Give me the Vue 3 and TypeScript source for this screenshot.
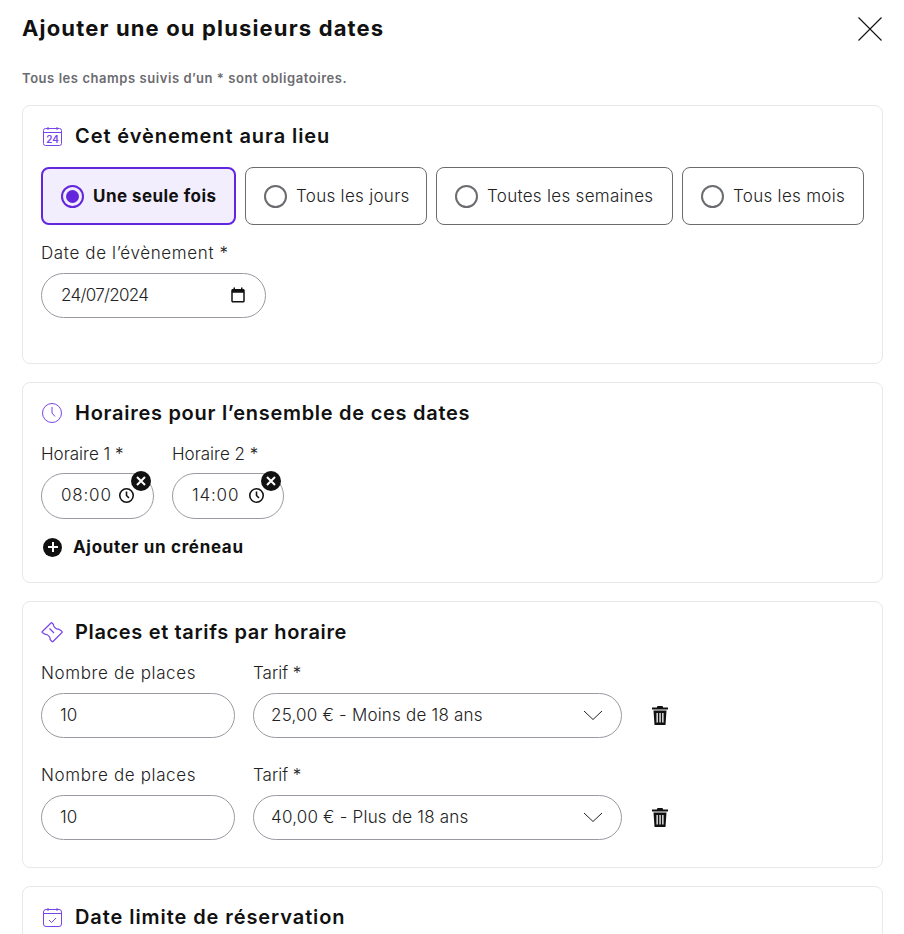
<script setup lang="ts">
interface Option { label: string; width: number; active?: boolean }
interface Price { places: string; tarif: string }
const options: Option[] = [
  { label: 'Une seule fois', width: 195, active: true },
  { label: 'Tous les jours', width: 182 },
  { label: 'Toutes les semaines', width: 237 },
  { label: 'Tous les mois', width: 182 },
]
const times = [
  { label: 'Horaire 1', value: '08:00', width: 113 },
  { label: 'Horaire 2', value: '14:00', width: 112 },
]
const prices: Price[] = [
  { places: '10', tarif: '25,00 € - Moins de 18 ans' },
  { places: '10', tarif: '40,00 € - Plus de 18 ans' },
]
</script>

<template>
  <div class="page">
    <header class="top">
      <h1>Ajouter une ou plusieurs dates</h1>
      <svg class="close" width="24" height="24" viewBox="0 0 24 24" fill="none" stroke="#111" stroke-width="1.1">
        <path d="M0.5 0.5 23.5 23.5M23.5 0.5 0.5 23.5" />
      </svg>
    </header>
    <p class="hint">Tous les champs suivis d’un * sont obligatoires.</p>

    <section class="card first">
      <h2>
        <svg class="hicon" width="22" height="20" viewBox="0 0 22 20" fill="none" stroke="#7a45e8" stroke-width="1">
          <rect x="2.5" y="2.5" width="18" height="17" rx="2" />
          <path d="M2.5 6.5h18M7 1v3M16 1v3" />
          <text x="11.5" y="17" text-anchor="middle" class="cal-num">24</text>
        </svg>
        Cet évènement aura lieu
      </h2>
      <div class="options">
        <div v-for="o in options" :key="o.label" class="option" :class="{ active: o.active }" :style="{ width: o.width + 'px' }">
          <span class="radio"><span v-if="o.active" class="dot"></span></span>
          <span>{{ o.label }}</span>
        </div>
      </div>
      <div class="field date">
        <label class="wide">Date de l’évènement *</label>
        <div class="input">
          <span class="grow date-value">24/07/2024</span>
          <svg width="18" height="18" viewBox="0 0 24 24" fill="#111">
            <path d="M19 4h-1V2h-2v2H8V2H6v2H5C3.9 4 3 4.9 3 6v14c0 1.1.9 2 2 2h14c1.1 0 2-.9 2-2V6c0-1.1-.9-2-2-2zm0 16H5V9h14v11z" />
          </svg>
        </div>
      </div>
    </section>

    <section class="card second">
      <h2>
        <svg class="hicon" width="22" height="22" viewBox="0 0 22 22" fill="none" stroke="#7a45e8" stroke-width="1">
          <circle cx="11" cy="11" r="9.5" />
          <path d="M11 5v6l3 3.5" />
        </svg>
        Horaires pour l’ensemble de ces dates
      </h2>
      <div class="times">
        <div v-for="t in times" :key="t.label" class="field" :style="{ width: t.width + 'px' }">
          <label>{{ t.label }} *</label>
          <div class="input time">
            <span class="grow time-value">{{ t.value }}</span>
            <svg width="17" height="17" viewBox="0 0 24 24" fill="none" stroke="#111" stroke-width="2.2">
              <circle cx="12" cy="12" r="9.5" />
              <path d="M12 6.5V12l3.5 3.5" />
            </svg>
            <span class="remove">
              <svg width="10" height="10" viewBox="0 0 10 10" stroke="#fff" stroke-width="2" fill="none"><path d="M1 1l8 8M9 1 1 9" /></svg>
            </span>
          </div>
        </div>
      </div>
      <div class="add">
        <span class="plus">
          <svg width="12" height="12" viewBox="0 0 12 12" stroke="#fff" stroke-width="2" fill="none"><path d="M6 1v10M1 6h10" /></svg>
        </span>
        Ajouter un créneau
      </div>
    </section>

    <section class="card third">
      <h2>
        <svg class="hicon" width="22" height="22" viewBox="0 0 22 22" fill="none" stroke="#7a45e8" stroke-width="1.2">
          <path d="M1.3 10.5 10 2Q10.5 1.5 11 2L12.5 3.5C12 5.5 15.5 8.5 17.5 8L20.8 10.3Q21.5 11 21 11.5L12 20.5Q11.5 21 11 20.5L9 18.5C10 16.5 6.5 13 4.5 13.5L1.3 11.5Q.8 11 1.3 10.5Z" />
          <path d="M8.5 7.5 13 12" />
        </svg>
        Places et tarifs par horaire
      </h2>
      <div v-for="(p, i) in prices" :key="i" class="price">
        <div class="field places">
          <label class="wide">Nombre de places</label>
          <div class="input places-input"><span>{{ p.places }}</span></div>
        </div>
        <div class="field tarif">
          <label>Tarif *</label>
          <div class="input tarif-input">
            <span class="grow">{{ p.tarif }}</span>
            <svg width="20" height="10" viewBox="0 0 20 10" fill="none" stroke="#222" stroke-width="1"><path d="M1 1l9 8.5L19 1" /></svg>
          </div>
        </div>
        <svg class="trash" width="16" height="19" viewBox="0 0 16 19" fill="#111">
          <path d="M5.5 0h5l.7 1.5H16v2H0v-2h4.8L5.5 0z" />
          <path fill-rule="evenodd" d="M1.5 4.5h13l-1 14.5H2.5L1.5 4.5zM4.5 7v9.5h1.3V7H4.5zm2.900 0v9.500h1.300V7H7.400zm2.800 0v9.500h1.300V7h-1.300z" />
        </svg>
      </div>
    </section>

    <section class="card fourth">
      <h2>
        <svg class="hicon" width="22" height="20" viewBox="0 0 22 20" fill="none" stroke="#7a45e8" stroke-width="1">
          <rect x="2.5" y="2.5" width="18" height="17" rx="2.5" />
          <path d="M2.5 6.5h18M7 1v3M16 1v3M8 13l2.500 2.500 4.500-4.500" />
        </svg>
        Date limite de réservation
      </h2>
    </section>
  </div>
</template>

<style>
html, body { margin: 0; background: #fff; overflow: hidden; height: 934px; }
</style>

<style scoped>
.page {
  width: 904px;
  height: 934px;
  overflow: hidden;
  box-sizing: border-box;
  padding: 0 21px 0 22px;
  font-family: Inter, "Liberation Sans", sans-serif;
  color: #111;
}
.top { display: flex; justify-content: space-between; align-items: center; height: 56px; }
h1 { margin: 0; font-size: 22px; font-weight: 700; line-height: 28px; letter-spacing: 1.15px; }
.close { margin-right: 1px; margin-top: 1px; }
.hint { margin: 13px 0 0; font-size: 13px; font-weight: 600; line-height: 18px; letter-spacing: 0.56px; color: #6b6b70; }
.card {
  box-sizing: border-box;
  border: 1px solid #e8e8ea;
  border-radius: 8px;
  padding: 18px 18px 0;
  margin-bottom: 18px;
}
.first { height: 259px; margin-top: 18px; }
.second { height: 201px; }
.third { height: 267px; }
.fourth { height: 100px; }
h2 {
  display: flex;
  align-items: center;
  gap: 12px;
  margin: 0;
  height: 24px;
  font-size: 20px;
  font-weight: 600;
  line-height: 24px;
  letter-spacing: 0.92px;
}
.second h2 { letter-spacing: 0.72px; }
.third h2 { letter-spacing: 0.65px; }
.hicon { flex: none; }
.cal-num { font: 600 10px Inter, sans-serif; fill: #7a45e8; stroke: none; letter-spacing: 0; }
.options { display: flex; gap: 9px; margin-top: 19px; }
.option {
  box-sizing: border-box;
  height: 58px;
  display: flex;
  align-items: center;
  gap: 9px;
  padding-left: 18px;
  border: 1px solid #6b6b70;
  border-radius: 8px;
  font-size: 17px;
  font-weight: 300;
  letter-spacing: 0.3px;
  color: #222;
}
.option.active {
  border: 2px solid #6326dd;
  background: #f3eefd;
  font-weight: 700;
  letter-spacing: 0.45px;
  color: #111;
}
.radio {
  box-sizing: border-box;
  flex: none;
  width: 23px;
  height: 23px;
  border: 2px solid #6b6b70;
  border-radius: 50%;
  display: flex;
  align-items: center;
  justify-content: center;
}
.active .radio { border-color: #6326dd; }
.dot { width: 13px; height: 13px; border-radius: 50%; background: #6326dd; }
.field label { display: block; font-size: 17px; font-weight: 300; line-height: 20px; color: #222; white-space: nowrap; }
.field label.wide { letter-spacing: 0.63px; }
.input {
  box-sizing: border-box;
  position: relative;
  height: 45px;
  margin-top: 10px;
  display: flex;
  align-items: center;
  padding: 0 18px 2px 19px;
  border: 1px solid #9a9aa2;
  border-radius: 23px;
  font-size: 17px;
  font-weight: 300;
  color: #222;
}
.grow { flex: 1; white-space: nowrap; }
.date-value { letter-spacing: -0.7px; }
.time-value { letter-spacing: 0.8px; }
.places-input { padding-left: 18px; }
.tarif-input { padding-left: 17px; letter-spacing: 0.2px; }
.date { width: 225px; margin-top: 18px; }
.times { display: flex; gap: 18px; margin-top: 19px; }
.input.time { height: 46px; margin-top: 9px; }
.remove {
  position: absolute;
  top: -3px;
  right: 2px;
  width: 20px;
  height: 20px;
  border-radius: 50%;
  background: #111;
  display: flex;
  align-items: center;
  justify-content: center;
}
.add { display: flex; align-items: center; gap: 11px; margin-top: 18px; padding-left: 2px; font-size: 17px; font-weight: 700; line-height: 20px; letter-spacing: 0.67px; }
.plus {
  width: 19px;
  height: 19px;
  border-radius: 50%;
  background: #111;
  display: flex;
  align-items: center;
  justify-content: center;
}
.price { display: flex; align-items: flex-end; gap: 18px; margin-top: 19px; }
.price + .price { margin-top: 27px; }
.places { width: 194px; }
.tarif { width: 369px; }
.trash { margin: 0 0 13px 12px; }
</style>
